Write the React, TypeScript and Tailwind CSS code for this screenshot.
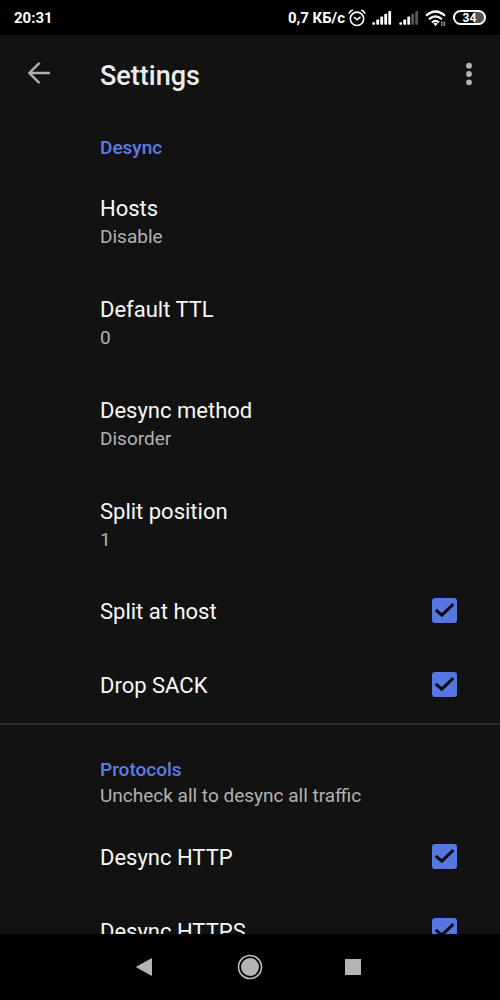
import { useState } from "react";

type Row = { title: string; value: string };

const rows: Row[] = [
  { title: "Hosts", value: "Disable" },
  { title: "Default TTL", value: "0" },
  { title: "Desync method", value: "Disorder" },
  { title: "Split position", value: "1" },
];

function CheckRow({ id, label }: { id: string; label: string }) {
  const [on, setOn] = useState(true);
  return (
    <div className="flex h-[74px] items-center justify-between pr-[43px] pl-[100px]">
      <label htmlFor={id} className="text-[22px] leading-[30px] text-[#f8f8f8]">
        {label}
      </label>
      <span className="relative mb-1 flex size-[25px]">
        <input
          id={id}
          type="checkbox"
          checked={on}
          onChange={() => setOn(!on)}
          className="size-[25px] appearance-none rounded-[3px] border-2 border-[#5677e0] checked:bg-[#5677e0]"
        />
        {on && (
          <svg viewBox="0 0 25 25" className="pointer-events-none absolute inset-0 size-[25px]" fill="none" stroke="#0d0d0d" strokeWidth="3">
            <path d="M3.800 11.800 9.800 17.200 21.300 6.200" />
          </svg>
        )}
      </span>
    </div>
  );
}

function Signal({ bars }: { bars: number }) {
  return (
    <svg viewBox="0 0 20 16" className="h-4 w-5" fill="#fff">
      {[0, 1, 2, 3, 4].map((i) => (
        <rect key={i} x={0.3 + i * 4} y={12.2 - i * 2.8} width="2.8" height={2.6 + i * 2.8} rx="0.8" opacity={i < bars ? 1 : 0.35} />
      ))}
    </svg>
  );
}

function StatusBar() {
  return (
    <div className="flex h-[35px] shrink-0 items-center bg-black pr-[14px] pl-[14px] text-[15px] font-bold text-white">
      <span className="flex-1 pt-px">20:31</span>
      <span className="pt-px">0,7 КБ/с</span>
      <svg viewBox="0 0 18 18" className="ml-[3px] size-[18px]" fill="none" stroke="#fff" strokeWidth="1.6" strokeLinecap="round">
        <circle cx="9" cy="9.800" r="6.700" />
        <path d="M6.500 8.500 9 10.800l3-2.500M1.200 4.200Q2 2 4.300 1.300M16.800 4.200Q16 2 13.700 1.300" />
      </svg>
      <span className="ml-[6px] flex gap-[7px]">
        <Signal bars={5} />
        <Signal bars={3} />
      </span>
      <svg viewBox="0 0 22 18" className="ml-[6px] h-[18px] w-[22px]" fill="none" stroke="#fff" strokeWidth="2.2">
        <path d="M1 6.800Q10.500-1.800 20 6.800M4 10.300Q10.500 4.300 17 10.300M7 13.500Q10.500 10.300 14 13.500" />
        <path d="m10.500 17-2.200-2.300q2.200-1.700 4.400 0z" fill="#fff" stroke="none" />
        <path d="M16.800 12.500v4.500M19.300 12.500v4.500" stroke="#aaa" strokeWidth="1.200" />
      </svg>
      <span className="ml-[6px] flex h-[15px] w-[33px] items-center justify-center overflow-hidden rounded-full border-2 border-white bg-linear-to-r from-black from-65% to-[#555] to-65% text-[12px] leading-[12px]">
        34
      </span>
    </div>
  );
}

export default function App() {
  return (
    <div className="flex h-screen flex-col overflow-hidden bg-[#121212] font-[Roboto,sans-serif]">
      <StatusBar />
      <header className="flex h-[79px] shrink-0 items-center pr-[14px] pl-[26px]">
        <button aria-label="Back" className="w-[74px] pb-[3px]">
          <svg viewBox="0 0 26 26" className="size-[26px]" fill="none" stroke="#b0b0b0" strokeWidth="2.4">
            <path d="M24 13H3.500M13.500 2.800 3.300 13l10.200 10.200" />
          </svg>
        </button>
        <h1 className="flex-1 pt-[2px] text-[27px] leading-8 font-medium text-[#ececec]">Settings</h1>
        <button aria-label="More options" className="flex w-[34px] justify-center pb-[2px]">
          <svg viewBox="0 0 8 24" className="h-6 w-2" fill="#b4b4b4">
            <circle cx="4" cy="3.700" r="2.900" />
            <circle cx="4" cy="12" r="2.900" />
            <circle cx="4" cy="20.300" r="2.900" />
          </svg>
        </button>
      </header>
      <main className="min-h-0 flex-1 overflow-hidden">
        <section className="border-b-2 border-[#2c2c2c] pt-[21px]">
          <h2 className="pl-[100px] text-[19px] leading-[26px] font-medium text-[#5f7de6]">Desync</h2>
          <div className="pt-[10px]">
            {rows.map((row) => (
              <button key={row.title} className="flex h-[101px] w-full flex-col justify-center pl-[100px] text-left">
                <span className="text-[22px] leading-[30px] text-[#f8f8f8]">{row.title}</span>
                <span className="text-[19px] leading-[26px] text-[#b2b2b2]">{row.value}</span>
              </button>
            ))}
          </div>
          <CheckRow id="split-host" label="Split at host" />
          <CheckRow id="drop-sack" label="Drop SACK" />
        </section>
        <section className="pt-[32px]">
          <div className="pb-[12px] pl-[100px]">
            <h2 className="text-[19px] leading-[26px] font-medium text-[#5f7de6]">Protocols</h2>
            <p className="text-[19px] leading-[26px] text-[#b2b2b2]">Uncheck all to desync all traffic</p>
          </div>
          <CheckRow id="desync-http" label="Desync HTTP" />
          <CheckRow id="desync-https" label="Desync HTTPS" />
        </section>
      </main>
      <nav className="grid h-[66px] shrink-0 grid-cols-[1fr_66px_1fr] items-center bg-black">
        <button aria-label="Back" className="flex justify-end pr-[65px]">
          <svg viewBox="0 0 16 18" className="h-[18px] w-4" fill="#b4b4b4"><path d="M16 1v16q0 1-1 .500L.500 9.500q-.500-.500 0-1L15 .500q1-.500 1 .500z" /></svg>
        </button>
        <button aria-label="Home" className="flex justify-center">
          <svg viewBox="0 0 26 26" className="size-[26px]" fill="#b4b4b4">
            <circle cx="13" cy="13" r="11.500" fill="none" stroke="#c0c0c0" strokeWidth="1.600" />
            <circle cx="13" cy="13" r="9" />
          </svg>
        </button>
        <button aria-label="Recent apps" className="flex pl-[62px]">
          <svg viewBox="0 0 16 16" className="size-4" fill="#b4b4b4"><path d="M0 0h16v16H0z" /></svg>
        </button>
      </nav>
    </div>
  );
}
